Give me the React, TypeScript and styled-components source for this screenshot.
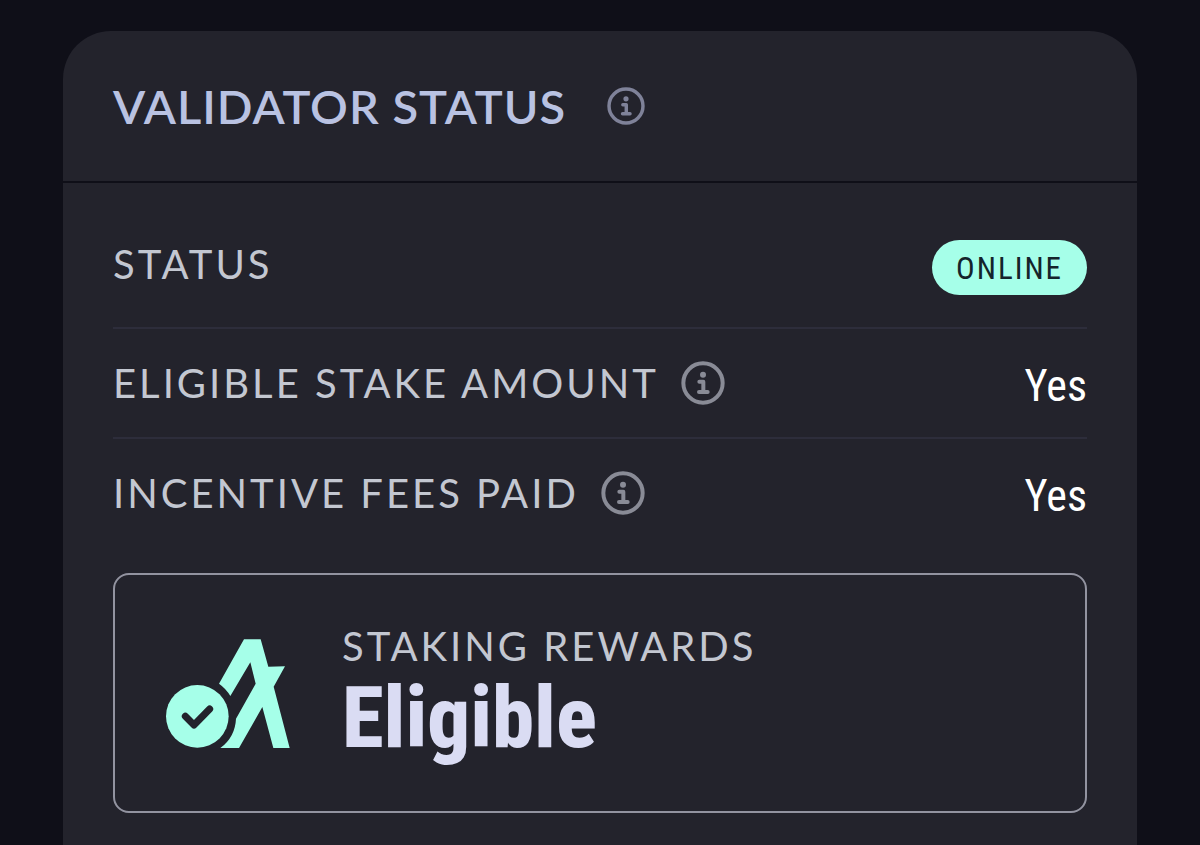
import React from "react";
import styled, { createGlobalStyle } from "styled-components";

const color = {
  page: "#0f0f18",
  card: "#23232c",
  line: "#2d2d3b",
  title: "#b9c2e2",
  label: "#c3c7d1",
  value: "#ffffff",
  mint: "#a6ffe9",
  outline: "#9293a0",
  lavender: "#dadcf3",
};

const condensed = `"Roboto Condensed", Roboto, sans-serif`;

const GlobalStyle = createGlobalStyle`
  * { box-sizing: border-box; }
  body {
    margin: 0;
    background: ${color.page};
    font-family: Lato, "Open Sans", sans-serif;
  }
`;

const Page = styled.main`
  display: flex;
  flex-direction: column;
  min-height: 100vh;
  padding: 31px 63px 0;
`;

const Card = styled.section`
  display: flex;
  flex: 1;
  flex-direction: column;
  border-radius: 48px 48px 0 0;
  background: ${color.card};
`;

const CardHeader = styled.header`
  display: flex;
  align-items: center;
  gap: 41px;
  height: 152px;
  padding: 0 50px;
  border-bottom: 2px solid ${color.page};
`;

const Title = styled.h2`
  margin: 0;
  color: ${color.title};
  font-size: 47px;
  font-weight: 600;
  line-height: 64px;
  letter-spacing: 1px;
`;

const CardBody = styled.div`
  padding: 57px 50px 32px;
`;

const StatusList = styled.dl`
  margin: 0 0 26px;
`;

const Label = styled.dt`
  display: flex;
  align-items: center;
  gap: 22px;
  color: ${color.label};
  font-size: 40px;
  font-weight: 400;
  line-height: 48px;
  letter-spacing: 3px;
`;

const Value = styled.dd`
  margin: 0;
  color: ${color.value};
  font-family: ${condensed};
  font-size: 44px;
  font-weight: 400;
  line-height: 56px;
`;

const StatusRow = styled.div`
  display: flex;
  align-items: center;
  justify-content: space-between;
  height: 110px;

  &:first-child {
    align-items: flex-start;
    height: 87px;
  }

  & + & {
    border-top: 2px solid ${color.line};
  }

  & + & ${Value} {
    padding-top: 6px;
  }
`;

const Badge = styled.span`
  display: block;
  padding: 3px 24px 0;
  border-radius: 28px;
  background: ${color.mint};
  color: #14242b;
  font-size: 31px;
  line-height: 52px;
  letter-spacing: 2px;
`;

const InfoButton = styled.button<{ $size: number; $tone: string }>`
  display: block;
  width: ${(p) => p.$size}px;
  height: ${(p) => p.$size}px;
  padding: 0;
  border: 0;
  background: none;
  color: ${(p) => p.$tone};
  cursor: pointer;

  svg {
    display: block;
    width: 100%;
    height: 100%;
  }
`;

const RewardPanel = styled.section`
  display: flex;
  align-items: center;
  gap: 52px;
  height: 240px;
  padding: 0 51px;
  border: 2px solid ${color.outline};
  border-radius: 16px;
`;

const RewardText = styled.div`
  display: flex;
  flex-direction: column;
  gap: 2px;
`;

const RewardLabel = styled.span`
  color: ${color.label};
  font-size: 40px;
  font-weight: 400;
  line-height: 48px;
  letter-spacing: 3px;
`;

const RewardValue = styled.strong`
  color: ${color.lavender};
  font-family: ${condensed};
  font-size: 85px;
  font-weight: 800;
  line-height: 92px;
`;

function Info({ about, size = 44, tone = "#898b96" }: { about: string; size?: number; tone?: string }) {
  return (
    <InfoButton type="button" aria-label={`About ${about}`} $size={size} $tone={tone}>
      <svg viewBox="0 0 132 132" fill="none" stroke="currentColor" strokeLinecap="round" strokeLinejoin="round">
        <circle cx="66" cy="66" r="59" strokeWidth="12" />
        <circle cx="66" cy="41" r="9" fill="currentColor" stroke="none" />
        <path d="M55 62H67V93M54 93H80" strokeWidth="12" />
      </svg>
    </InfoButton>
  );
}

function RewardLogo() {
  return (
    <svg width="124" height="109" viewBox="78 56 372 327" aria-hidden="true">
      <path
        fill={color.mint}
        d="M312 57H362L385 139L435 138L401 199L449 383H400L367 260L297 383H241A116 116 0 0 0 288 295L347 190L331 126L271 227A116 116 0 0 0 237 190Z"
      />
      <circle cx="172" cy="288" r="94" fill={color.mint} />
      <path
        d="M136 288L162 314L209 266"
        fill="none"
        stroke={color.card}
        strokeWidth="21"
        strokeLinecap="round"
        strokeLinejoin="round"
      />
    </svg>
  );
}

export default function App() {
  return (
    <>
      <GlobalStyle />
      <Page>
        <Card>
          <CardHeader>
            <Title>VALIDATOR STATUS</Title>
            <Info about="validator status" size={38} tone="#7f8299" />
          </CardHeader>
          <CardBody>
            <StatusList>
              <StatusRow>
                <Label>STATUS</Label>
                <Value>
                  <Badge>ONLINE</Badge>
                </Value>
              </StatusRow>
              <StatusRow>
                <Label>
                  ELIGIBLE STAKE AMOUNT
                  <Info about="eligible stake amount" />
                </Label>
                <Value>Yes</Value>
              </StatusRow>
              <StatusRow>
                <Label>
                  INCENTIVE FEES PAID
                  <Info about="incentive fees paid" />
                </Label>
                <Value>Yes</Value>
              </StatusRow>
            </StatusList>
            <RewardPanel>
              <RewardLogo />
              <RewardText>
                <RewardLabel>STAKING REWARDS</RewardLabel>
                <RewardValue>Eligible</RewardValue>
              </RewardText>
            </RewardPanel>
          </CardBody>
        </Card>
      </Page>
    </>
  );
}
